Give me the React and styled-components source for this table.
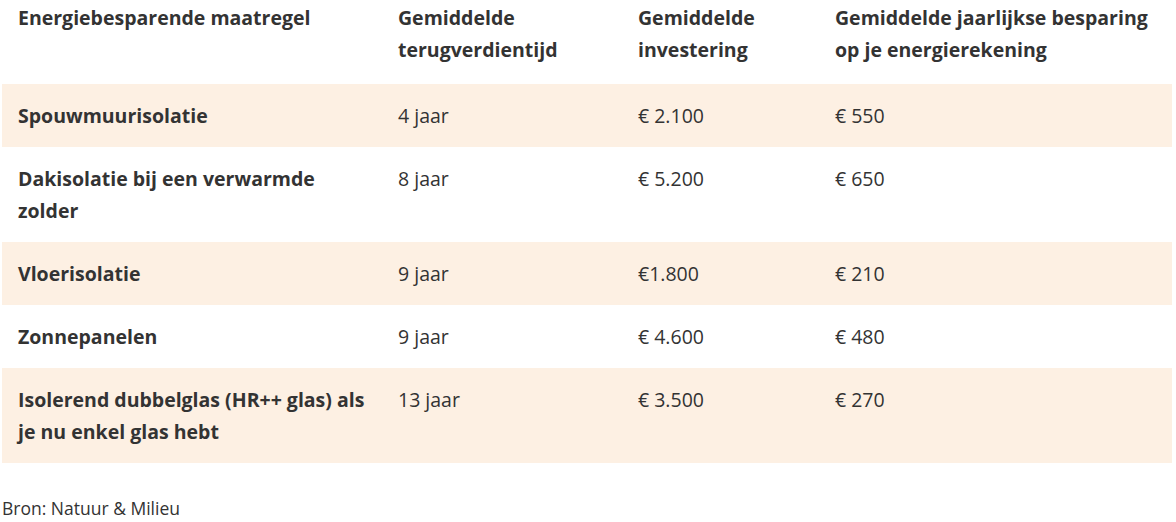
import React from "react";
import styled, { createGlobalStyle } from "styled-components";

const GlobalStyle = createGlobalStyle`
  body {
    margin: 0;
    background: #ffffff;
    font-family: "Open Sans", "Lato", sans-serif;
    color: #333333;
  }
`;

const Wrapper = styled.div`
  width: 1176px;
  height: 522px;
  padding: 0 4px 0 2px;
  box-sizing: border-box;
`;

const Table = styled.table`
  width: 1170px;
  border-collapse: collapse;
  table-layout: fixed;
  font-size: 19.5px;
  line-height: 32px;
`;

const HeadCell = styled.th`
  text-align: left;
  vertical-align: top;
  font-weight: 700;
  padding: 2px 16px 18px;
  color: #333333;
`;

const Row = styled.tr`
  background: ${(p) => (p.$shaded ? "#fdf0e3" : "#ffffff")};
`;

const Cell = styled.td`
  vertical-align: top;
  padding: 16px 16px 15px;
  font-weight: ${(p) => (p.$bold ? 700 : 400)};
  color: #333333;
`;

const Source = styled.p`
  margin: 33px 0 0;
  font-size: 17.5px;
  line-height: 24px;
  color: #333333;
`;

const columns = [380, 240, 197, 353];

const headers = [
  "Energiebesparende maatregel",
  "Gemiddelde terugverdientijd",
  "Gemiddelde investering",
  "Gemiddelde jaarlijkse besparing op je energierekening",
];

const rows = [
  ["Spouwmuurisolatie", "4 jaar", "€ 2.100", "€ 550"],
  ["Dakisolatie bij een verwarmde zolder", "8 jaar", "€ 5.200", "€ 650"],
  ["Vloerisolatie", "9 jaar", "€1.800", "€ 210"],
  ["Zonnepanelen", "9 jaar", "€ 4.600", "€ 480"],
  ["Isolerend dubbelglas (HR++ glas) als je nu enkel glas hebt", "13 jaar", "€ 3.500", "€ 270"],
];

export default function App() {
  return (
    <Wrapper>
      <GlobalStyle />
      <Table>
        <colgroup>
          {columns.map((w, i) => (
            <col key={i} style={{ width: w }} />
          ))}
        </colgroup>
        <thead>
          <tr>
            {headers.map((h) => (
              <HeadCell key={h}>{h}</HeadCell>
            ))}
          </tr>
        </thead>
        <tbody>
          {rows.map((r, i) => (
            <Row key={r[0]} $shaded={i % 2 === 0}>
              {r.map((c, j) => (
                <Cell key={j} $bold={j === 0}>
                  {c}
                </Cell>
              ))}
            </Row>
          ))}
        </tbody>
      </Table>
      <Source>Bron: Natuur &amp; Milieu</Source>
    </Wrapper>
  );
}
